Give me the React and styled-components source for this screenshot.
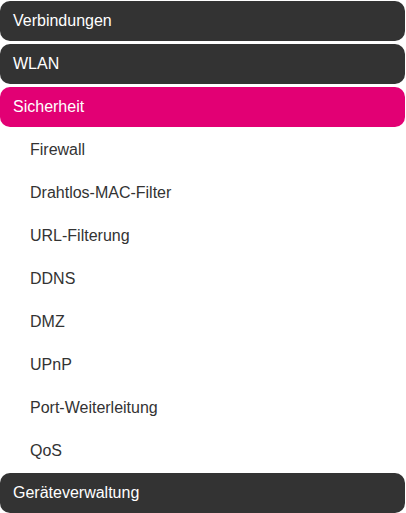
import React from 'react';
import styled, { createGlobalStyle } from 'styled-components';

const GlobalStyle = createGlobalStyle`
  html, body {
    margin: 0;
    padding: 0;
    background: #fff;
    font-family: "Liberation Sans", Arial, sans-serif;
  }
`;

const sections = [
  { title: 'Verbindungen' },
  { title: 'WLAN' },
  {
    title: 'Sicherheit',
    active: true,
    items: [
      'Firewall',
      'Drahtlos-MAC-Filter',
      'URL-Filterung',
      'DDNS',
      'DMZ',
      'UPnP',
      'Port-Weiterleitung',
      'QoS',
    ],
  },
  { title: 'Geräteverwaltung' },
];

const App = () => {
  return (
    <>
      <GlobalStyle />
      <Menu>
        {sections.map((s) => (
          <Section key={s.title}>
            <Header $active={s.active}>{s.title}</Header>
            {s.items && (
              <SubList>
                {s.items.map((item) => (
                  <SubItem key={item}>{item}</SubItem>
                ))}
              </SubList>
            )}
          </Section>
        ))}
      </Menu>
    </>
  );
};

export default App;

const Menu = styled.nav`
  width: 405px;
  padding-top: 1px;
  display: flex;
  flex-direction: column;
  gap: 3px;
`;

const Section = styled.div`
  display: flex;
  flex-direction: column;
`;

const Header = styled.div`
  height: 40px;
  display: flex;
  align-items: center;
  padding-left: 13px;
  border-radius: 10px;
  background: ${({ $active }) => ($active ? '#e20074' : '#333333')};
  color: #fff;
  font-size: 16px;
`;

const SubList = styled.ul`
  list-style: none;
  margin: 0 0 -1px;
  padding: 0;
`;

const SubItem = styled.li`
  height: 43px;
  display: flex;
  align-items: center;
  padding: 2px 0 0 30px;
  box-sizing: border-box;
  color: #333;
  font-size: 16px;
`;
